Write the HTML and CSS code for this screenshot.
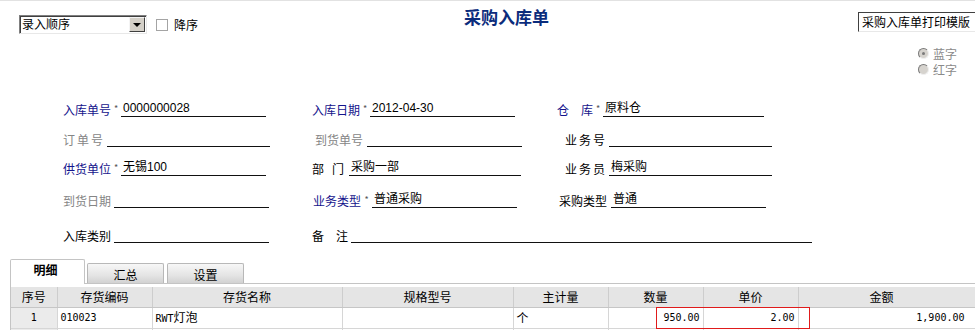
FILE: index.html
```html
<!DOCTYPE html>
<html lang="zh-CN">
<head>
  <meta charset="UTF-8" />
  <title>采购入库单</title>
  <link rel="stylesheet" href="styles.css">
</head>
<body>
<div class="page">

  <!-- TOOLBAR -->
  <div class="toolbar">
    <div class="order-select">
      <span class="select-text">录入顺序</span>
      <span class="select-btn"><i class="arrow"></i></span>
    </div>
    <div class="check"><span class="check-box"></span>降序</div>
    <h1 class="title">采购入库单</h1>
    <div class="tpl-input">采购入库单打印模版</div>
  </div>

  <!-- 蓝字 / 红字 -->
  <div class="color-radios">
    <div class="radio-row"><span class="radio checked"></span>蓝字</div>
    <div class="radio-row"><span class="radio"></span>红字</div>
  </div>

  <!-- HEAD FORM -->
  <div class="head-form">
    <div class="field">
      <span class="lbl req">入库单号</span><span class="star">*</span>
      <span class="line w145">0000000028</span>
    </div>
    <div class="field">
      <span class="lbl req shift-l">入库日期</span><span class="star">*</span>
      <span class="line w145">2012-04-30</span>
    </div>
    <div class="field">
      <span class="lbl req spread s36">
        <span>仓</span><span>库</span>
      </span><span class="star">*</span>
      <span class="line w161">原料仓</span>
    </div>

    <div class="field">
      <span class="lbl dim spread s40">
        <span>订</span><span>单</span><span>号</span>
      </span>
      <span class="line gap4 w163"></span>
    </div>
    <div class="field">
      <span class="lbl dim ml2">到货单号</span>
      <span class="line gap4 w155"></span>
    </div>
    <div class="field">
      <span class="lbl spread s40 ml8">
        <span>业</span><span>务</span><span>号</span>
      </span>
      <span class="line gap4 w163"></span>
    </div>

    <div class="field">
      <span class="lbl req">供货单位</span><span class="star">*</span>
      <span class="line w145">无锡100</span>
    </div>
    <div class="field">
      <span class="lbl spread s32 shift-l">
        <span>部</span><span>门</span>
      </span>
      <span class="line gap5 w172">采购一部</span>
    </div>
    <div class="field">
      <span class="lbl spread s40 ml8">
        <span>业</span><span>务</span><span>员</span>
      </span>
      <span class="line gap4 w163">梅采购</span>
    </div>

    <div class="field">
      <span class="lbl dim">到货日期</span>
      <span class="line gap3 w155"></span>
    </div>
    <div class="field">
      <span class="lbl req">业务类型</span><span class="star wide">*</span>
      <span class="line w145">普通采购</span>
    </div>
    <div class="field">
      <span class="lbl ml2">采购类型</span>
      <span class="line gap4 w155">普通</span>
    </div>

    <div class="field">
      <span class="lbl">入库类别</span>
      <span class="line gap3 w155"></span>
    </div>
    <div class="field span2">
      <span class="lbl spread s36 shift-l">
        <span>备</span><span>注</span>
      </span>
      <span class="line gap3 w461"></span>
    </div>
  </div>

  <!-- TABS -->
  <div class="tabs">
    <div class="tab active">明细</div>
    <div class="tab">汇总</div>
    <div class="tab">设置</div>
  </div>

  <!-- DETAIL GRID -->
  <div class="grid-panel">
    <table class="grid">
      <colgroup>
        <col class="c-no"><col class="c-code"><col class="c-name"><col class="c-spec">
        <col class="c-unit"><col class="c-qty"><col class="c-price"><col class="c-sum">
      </colgroup>
      <thead>
        <tr>
          <th>序号</th><th>存货编码</th><th>存货名称</th><th>规格型号</th>
          <th>主计量</th><th>数量</th><th>单价</th><th class="last">金额</th>
        </tr>
      </thead>
      <tbody>
        <tr>
          <td class="no mono">1</td>
          <td class="mono">010023</td>
          <td><span class="mono">RWT</span>灯泡</td>
          <td></td>
          <td>个</td>
          <td class="num mono">950.00</td>
          <td class="num mono">2.00</td>
          <td class="num mono last">1,900.00</td>
        </tr>
        <tr>
          <td class="no"></td><td></td><td></td><td></td>
          <td></td><td></td><td></td><td class="last"></td>
        </tr>
      </tbody>
    </table>
    <!-- highlight on edited cells -->
    <div class="mark-box"></div>
  </div>

</div>
</body>
</html>
```

FILE: styles.css
```css
* {
  margin: 0;
  padding: 0;
  box-sizing: border-box;
}

body {
  background: #fff;
  color: #000;
  font-family: "Noto Sans CJK SC", sans-serif;
  font-size: 12px;
}

.page {
  width: 975px;
  height: 330px;
  overflow: hidden;
  border-top: 1px solid #e2e2e2;
}

/* Toolbar */
.toolbar {
  display: flex;
  align-items: flex-start;
  padding: 14px 0 0 19px;
}

.order-select {
  display: flex;
  width: 128px;
  height: 19px;
  border: 1px solid;
  border-color: #808080 #e8e8e8 #e8e8e8 #808080;
  box-shadow: inset 1px 1px 0 #404040;
  background: #fff;
  flex-shrink: 0;
}

.select-text {
  flex: 1;
  padding-left: 2px;
  line-height: 16px;
}

.select-btn {
  width: 16px;
  height: 15px;
  margin: 1px 1px 0 0;
  background: #d4d0c8;
  border: 1px solid;
  border-color: #f4f4f4 #404040 #404040 #f4f4f4;
  display: flex;
  justify-content: center;
  align-items: center;
}

.arrow {
  width: 0;
  height: 0;
  border-left: 4px solid transparent;
  border-right: 4px solid transparent;
  border-top: 4px solid #000;
}

.check {
  display: flex;
  align-items: center;
  gap: 6px;
  height: 19px;
  margin-left: 9px;
  flex-shrink: 0;
}

.check-box {
  width: 12px;
  height: 12px;
  border: 1px solid #a4a4a4;
  background: #fff;
}

.title {
  margin: -8px 0 0 266px;
  font-size: 17px;
  line-height: 20px;
  font-weight: bold;
  color: #0b2c7c;
  white-space: nowrap;
  flex-shrink: 0;
}

.tpl-input {
  width: 125px;
  height: 20px;
  margin: -3px -8px 0 auto;
  padding-left: 3px;
  line-height: 18px;
  white-space: nowrap;
  overflow: hidden;
  border: 1px solid;
  border-color: #404040 #e8e8e8 #e8e8e8 #404040;
  flex-shrink: 0;
}

/* Radios */
.color-radios {
  margin-top: 11px;
  padding-left: 918px;
  color: #8a8a8a;
}

.radio-row {
  display: flex;
  align-items: center;
  gap: 4px;
  height: 16px;
  white-space: nowrap;
}

.radio {
  width: 11px;
  height: 11px;
  border-radius: 50%;
  background: #d6d3ce;
  border: 1px solid;
  border-color: #7a7a7a #f0f0f0 #f0f0f0 #7a7a7a;
  display: flex;
  justify-content: center;
  align-items: center;
}

.radio.checked::after {
  content: "";
  width: 3px;
  height: 3px;
  border-radius: 50%;
  background: #7a7a7a;
}

/* Head form */
.head-form {
  display: grid;
  grid-template-columns: 250px 244px 1fr;
  grid-template-rows: 17px 30px 29px 32px 35px;
  margin-top: 23px;
  padding-left: 63px;
}

.field {
  display: flex;
  align-items: flex-end;
  white-space: nowrap;
}

.field.span2 {
  grid-column: 2 / span 2;
}

.lbl {
  flex-shrink: 0;
  line-height: 14px;
}

.lbl.req { color: #14148c; }
.lbl.dim { color: #858585; }

.spread {
  display: flex;
  justify-content: space-between;
}
.s32 { width: 32px; }
.s36 { width: 36px; }
.s40 { width: 40px; }

.shift-l { margin-left: -1px; }
.ml2 { margin-left: 2px; }
.ml8 { margin-left: 8px; }

.star {
  width: 10px;
  height: 9px;
  text-align: center;
  font-size: 9px;
  line-height: 9px;
  color: #555;
  margin-bottom: 4px;
  flex-shrink: 0;
}
.star.wide { width: 11px; }

.line {
  height: 15px;
  line-height: 13px;
  padding-left: 2px;
  border-bottom: 1px solid #111;
  font-family: "Liberation Sans", "Noto Sans CJK SC", sans-serif;
  flex-shrink: 0;
}

.gap3 { margin-left: 3px; }
.gap4 { margin-left: 4px; }
.gap5 { margin-left: 5px; }

.w145 { width: 145px; }
.w155 { width: 155px; }
.w161 { width: 161px; }
.w163 { width: 163px; }
.w172 { width: 172px; }
.w461 { width: 461px; }

/* Tabs */
.tabs {
  display: flex;
  align-items: flex-end;
  height: 24px;
  margin-top: 16px;
  padding-left: 10px;
}

.tab {
  width: 77px;
  height: 20px;
  margin-right: 3px;
  padding-top: 4px;
  line-height: 14px;
  text-align: center;
  border: 1px solid #b8b8b8;
  border-bottom: none;
  border-radius: 2px 2px 0 0;
  background: linear-gradient(#f7f7f7, #e4e4e4 60%, #d2d2d2);
}

.tab.active {
  width: 75px;
  height: 25px;
  margin-right: 2px;
  margin-bottom: -1px;
  padding-top: 3px;
  padding-right: 4px;
  font-weight: bold;
  background: #fff;
  border-color: #c4c4c4;
  position: relative;
  z-index: 1;
}

/* Grid */
.grid-panel {
  position: relative;
  margin-left: 10px;
  padding-top: 3px;
  border-top: 1px solid #c4c4c4;
  border-left: 1px solid #c4c4c4;
  overflow: hidden;
}

.grid {
  width: 964px;
  border-collapse: collapse;
  table-layout: fixed;
}

.c-no { width: 46px; }
.c-code { width: 95px; }
.c-name { width: 190px; }
.c-spec { width: 171px; }
.c-unit { width: 95px; }
.c-qty { width: 95px; }
.c-price { width: 95px; }
.c-sum { width: 177px; }

.grid th {
  height: 20px;
  font-weight: normal;
  font-size: 12px;
  line-height: 18px;
  background: #e5e5e5;
  border-right: 1px solid #cdcdcd;
  border-bottom: 1px solid #c6c6c6;
  text-align: center;
}

.grid td {
  height: 20px;
  padding: 0 3px;
  line-height: 18px;
  border-right: 1px solid #d6d6d6;
  border-bottom: 1px solid #d6d6d6;
  white-space: nowrap;
  overflow: hidden;
}

.grid th.last { padding-right: 10px; }
.grid td.last { padding-right: 10px; }

.grid td.no {
  background: #ebebeb;
  text-align: center;
}

.grid td.num { text-align: right; }

.mono {
  font-family: "DejaVu Sans Mono", monospace;
  font-size: 10px;
}

.mark-box {
  position: absolute;
  left: 645px;
  top: 23px;
  width: 154px;
  height: 22px;
  border: 1px solid #e01b1b;
}
```
